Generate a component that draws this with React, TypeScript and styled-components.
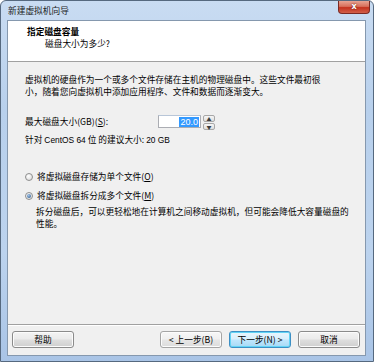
import styled, { createGlobalStyle } from 'styled-components'

const GlobalStyle = createGlobalStyle`
    html, body {
        margin: 0;
        padding: 0;
        background: #ffffff;
    }
    body {
        font-family: "Noto Sans CJK SC", "Noto Sans", sans-serif;
        font-size: 8.7px;
        color: #000;
    }
`

const Frame = styled.div`
    width: 374px;
    height: 362px;
    box-sizing: border-box;
    display: flex;
    flex-direction: column;
    background: linear-gradient(180deg, #c9dcf2 0%, #b8d0ec 30%, #bcd3ee 70%, #a9c4e6 100%);
    border: 1px solid #56697f;
    border-radius: 6px 6px 0 0;
    padding: 0 7px 5px 6px;
`

const TitleBar = styled.div`
    height: 19px;
    display: flex;
    align-items: center;
    justify-content: space-between;
    padding-left: 1px;
`

const TitleText = styled.span`
    font-size: 8.7px;
    line-height: 12px;
    color: #1e1e1e;
    margin-top: 1px;
`

const CloseButton = styled.div`
    align-self: flex-start;
    width: 32px;
    height: 13px;
    margin-right: -4px;
    box-sizing: border-box;
    border: 1px solid #7a2a24;
    border-top: none;
    border-radius: 0 0 4px 4px;
    background: linear-gradient(180deg, #e8a493 0%, #d8705c 45%, #c4321e 55%, #d2604a 100%);
    display: flex;
    align-items: center;
    justify-content: center;
    color: #fff;
    font-family: "DejaVu Sans", sans-serif;
    font-weight: 700;
    font-size: 8px;
    line-height: 1;
    text-shadow: 0 0 2px #5a1008;
`

const Client = styled.div`
    flex: 1;
    display: flex;
    flex-direction: column;
    background: #f0f0f0;
    border: 1px solid #8598ae;
`

const Header = styled.div`
    height: 41px;
    box-sizing: border-box;
    background: #ffffff;
    border-bottom: 1px solid #a0a0a0;
    padding: 5px 0 0 19px;
`

const HeaderTitle = styled.div`
    font-weight: 700;
    line-height: 12px;
`

const HeaderSub = styled.div`
    line-height: 12px;
    padding-left: 18px;
`

const Body = styled.div`
    flex: 1;
    padding: 12px 0 0 17px;
    display: flex;
    flex-direction: column;
`

const Paragraph = styled.p`
    margin: 0;
    line-height: 12px;
    width: 300px;
`

const SizeRow = styled.div`
    display: flex;
    align-items: center;
    margin-top: 17px;
    height: 13px;
`

const Label = styled.span`
    width: 133px;
    line-height: 12px;
`

const Underlined = styled.span`
    text-decoration: underline;
`

const NumberBox = styled.div`
    width: 43px;
    height: 13px;
    box-sizing: border-box;
    background: #fff;
    border: 1px solid #abadb3;
    border-top-color: #b8c6d8;
    display: flex;
    justify-content: flex-end;
    align-items: center;
    padding-right: 1px;
`

const Selected = styled.span`
    background: #3399ff;
    color: #fff;
    font-family: "Liberation Sans", sans-serif;
    font-size: 9px;
    line-height: 10px;
    padding: 0 1px;
`

const Spinner = styled.div`
    margin-left: 2px;
    width: 12px;
    height: 13px;
    display: flex;
    flex-direction: column;
    gap: 1px;
`

const SpinHalf = styled.div`
    flex: 1;
    box-sizing: border-box;
    border: 1px solid #a8a8a8;
    border-radius: 2px;
    background: linear-gradient(180deg, #f6f6f6, #dedede);
    display: flex;
    align-items: center;
    justify-content: center;
    font-size: 5px;
    line-height: 1;
    color: #3c3c3c;
`

const Recommend = styled.div`
    margin-top: 6px;
    line-height: 12px;
`

const Latin = styled.span`
    font-family: "Liberation Sans", sans-serif;
    font-size: 8.4px;
`

const RadioRow = styled.div<{ $gap: number }>`
    display: flex;
    align-items: center;
    gap: 4px;
    margin-top: ${(p) => p.$gap}px;
    line-height: 12px;
`

const RadioCircle = styled.span<{ $checked?: boolean }>`
    width: 8px;
    height: 8px;
    box-sizing: border-box;
    border-radius: 50%;
    border: 1px solid #8e8f8f;
    background: radial-gradient(circle at 40% 35%, #ffffff, #d6d6d6);
    display: flex;
    align-items: center;
    justify-content: center;
    &::after {
        content: '';
        display: ${(p) => (p.$checked ? 'block' : 'none')};
        width: 4px;
        height: 4px;
        border-radius: 50%;
        background: radial-gradient(circle at 40% 35%, #a6c6e8, #1d4f86);
    }
`

const Description = styled.p`
    margin: 4px 0 0 11px;
    line-height: 12px;
    width: 315px;
`

const Footer = styled.div`
    height: 31px;
    box-sizing: border-box;
    border-top: 1px solid #a0a0a0;
    box-shadow: inset 0 1px 0 #ffffff;
    display: flex;
    align-items: flex-start;
    padding: 6px 5px 0 4px;
`

const Spacer = styled.div`
    flex: 1;
`

const Button = styled.button<{ $default?: boolean }>`
    width: 62px;
    height: 17px;
    box-sizing: border-box;
    margin-left: ${(p) => (p.$default ? 7 : 0)}px;
    margin-right: ${(p) => (p.$default ? 7 : 0)}px;
    padding: 0;
    font-family: "Noto Sans CJK SC", "Noto Sans", sans-serif;
    font-size: 8.7px;
    line-height: 12px;
    color: #000;
    border-radius: 3px;
    border: 1px solid ${(p) => (p.$default ? '#3c8fc4' : '#8b8b8b')};
    background: ${(p) =>
        p.$default
            ? 'linear-gradient(180deg, #eaf6fd 0%, #d9f0fc 45%, #bee6fd 55%, #a7d9f5 100%)'
            : 'linear-gradient(180deg, #f4f4f4 0%, #ebebeb 45%, #dddddd 55%, #cfcfcf 100%)'};
    box-shadow: inset 0 0 0 1px ${(p) => (p.$default ? '#62d4f5' : '#fcfcfc')};
`

const BackButton = styled(Button)`
    background: linear-gradient(180deg, #f7f7f7 0%, #f0f0f0 45%, #e6e6e6 55%, #dcdcdc 100%);
    border-color: #a5a5a5;
`

export default function App() {
    return (
        <>
            <GlobalStyle />
            <Frame>
                <TitleBar>
                    <TitleText>新建虚拟机向导</TitleText>
                    <CloseButton>x</CloseButton>
                </TitleBar>
                <Client>
                    <Header>
                        <HeaderTitle>指定磁盘容量</HeaderTitle>
                        <HeaderSub>磁盘大小为多少?</HeaderSub>
                    </Header>
                    <Body>
                        <Paragraph>
                            虚拟机的硬盘作为一个或多个文件存储在主机的物理磁盘中。这些文件最初很小，随着您向虚拟机中添加应用程序、文件和数据而逐渐变大。
                        </Paragraph>
                        <SizeRow>
                            <Label>
                                最大磁盘大小(GB)(<Underlined>S</Underlined>):
                            </Label>
                            <NumberBox>
                                <Selected>20.0</Selected>
                            </NumberBox>
                            <Spinner>
                                <SpinHalf>▲</SpinHalf>
                                <SpinHalf>▼</SpinHalf>
                            </Spinner>
                        </SizeRow>
                        <Recommend>
                            针对 <Latin>CentOS 64</Latin> 位 的建议大小: <Latin>20 GB</Latin>
                        </Recommend>
                        <RadioRow $gap={25}>
                            <RadioCircle />
                            <span>
                                将虚拟磁盘存储为单个文件(<Underlined>O</Underlined>)
                            </span>
                        </RadioRow>
                        <RadioRow $gap={7}>
                            <RadioCircle $checked />
                            <span>
                                将虚拟磁盘拆分成多个文件(<Underlined>M</Underlined>)
                            </span>
                        </RadioRow>
                        <Description>
                            拆分磁盘后，可以更轻松地在计算机之间移动虚拟机，但可能会降低大容量磁盘的性能。
                        </Description>
                    </Body>
                    <Footer>
                        <Button>帮助</Button>
                        <Spacer />
                        <BackButton>&lt; 上一步(B)</BackButton>
                        <Button $default>下一步(N) &gt;</Button>
                        <Button>取消</Button>
                    </Footer>
                </Client>
            </Frame>
        </>
    )
}
